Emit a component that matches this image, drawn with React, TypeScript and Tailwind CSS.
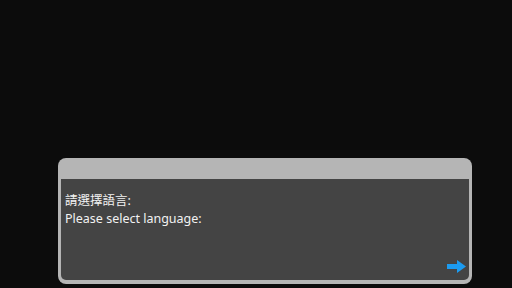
import React from "react";

const Arrow: React.FC = () => (
  <svg width="19" height="13" viewBox="0 0 19 13" className="block">
    <path d="M0 4h10V0l9 6.5L10 13V9H0z" fill="#1c9bf0" />
  </svg>
);

const App: React.FC = () => {
  return (
    <div
      className="w-[512px] h-[288px] bg-[#0c0c0c] flex flex-col justify-end pl-[58px] pr-[40px] pb-[4px]"
      style={{ fontFamily: '"Noto Sans", "Noto Sans CJK TC", sans-serif' }}
    >
      {/* Dialog box */}
      <div className="h-[126px] flex flex-col rounded-[8px] bg-[#b5b5b5] px-[3px] pb-[4px]">
        <div className="h-[21px] shrink-0" />
        <div className="flex-1 flex flex-col bg-[#444444] rounded-b-[5px] pl-[4px] pr-[3px] pt-[13px] pb-[7px]">
          <div className="text-[12.5px] leading-[18px] text-[#f2f2f2]">
            <p>請選擇語言:</p>
            <p>Please select language:</p>
          </div>
          <div className="mt-auto self-end">
            <Arrow />
          </div>
        </div>
      </div>
    </div>
  );
};

export default App;
